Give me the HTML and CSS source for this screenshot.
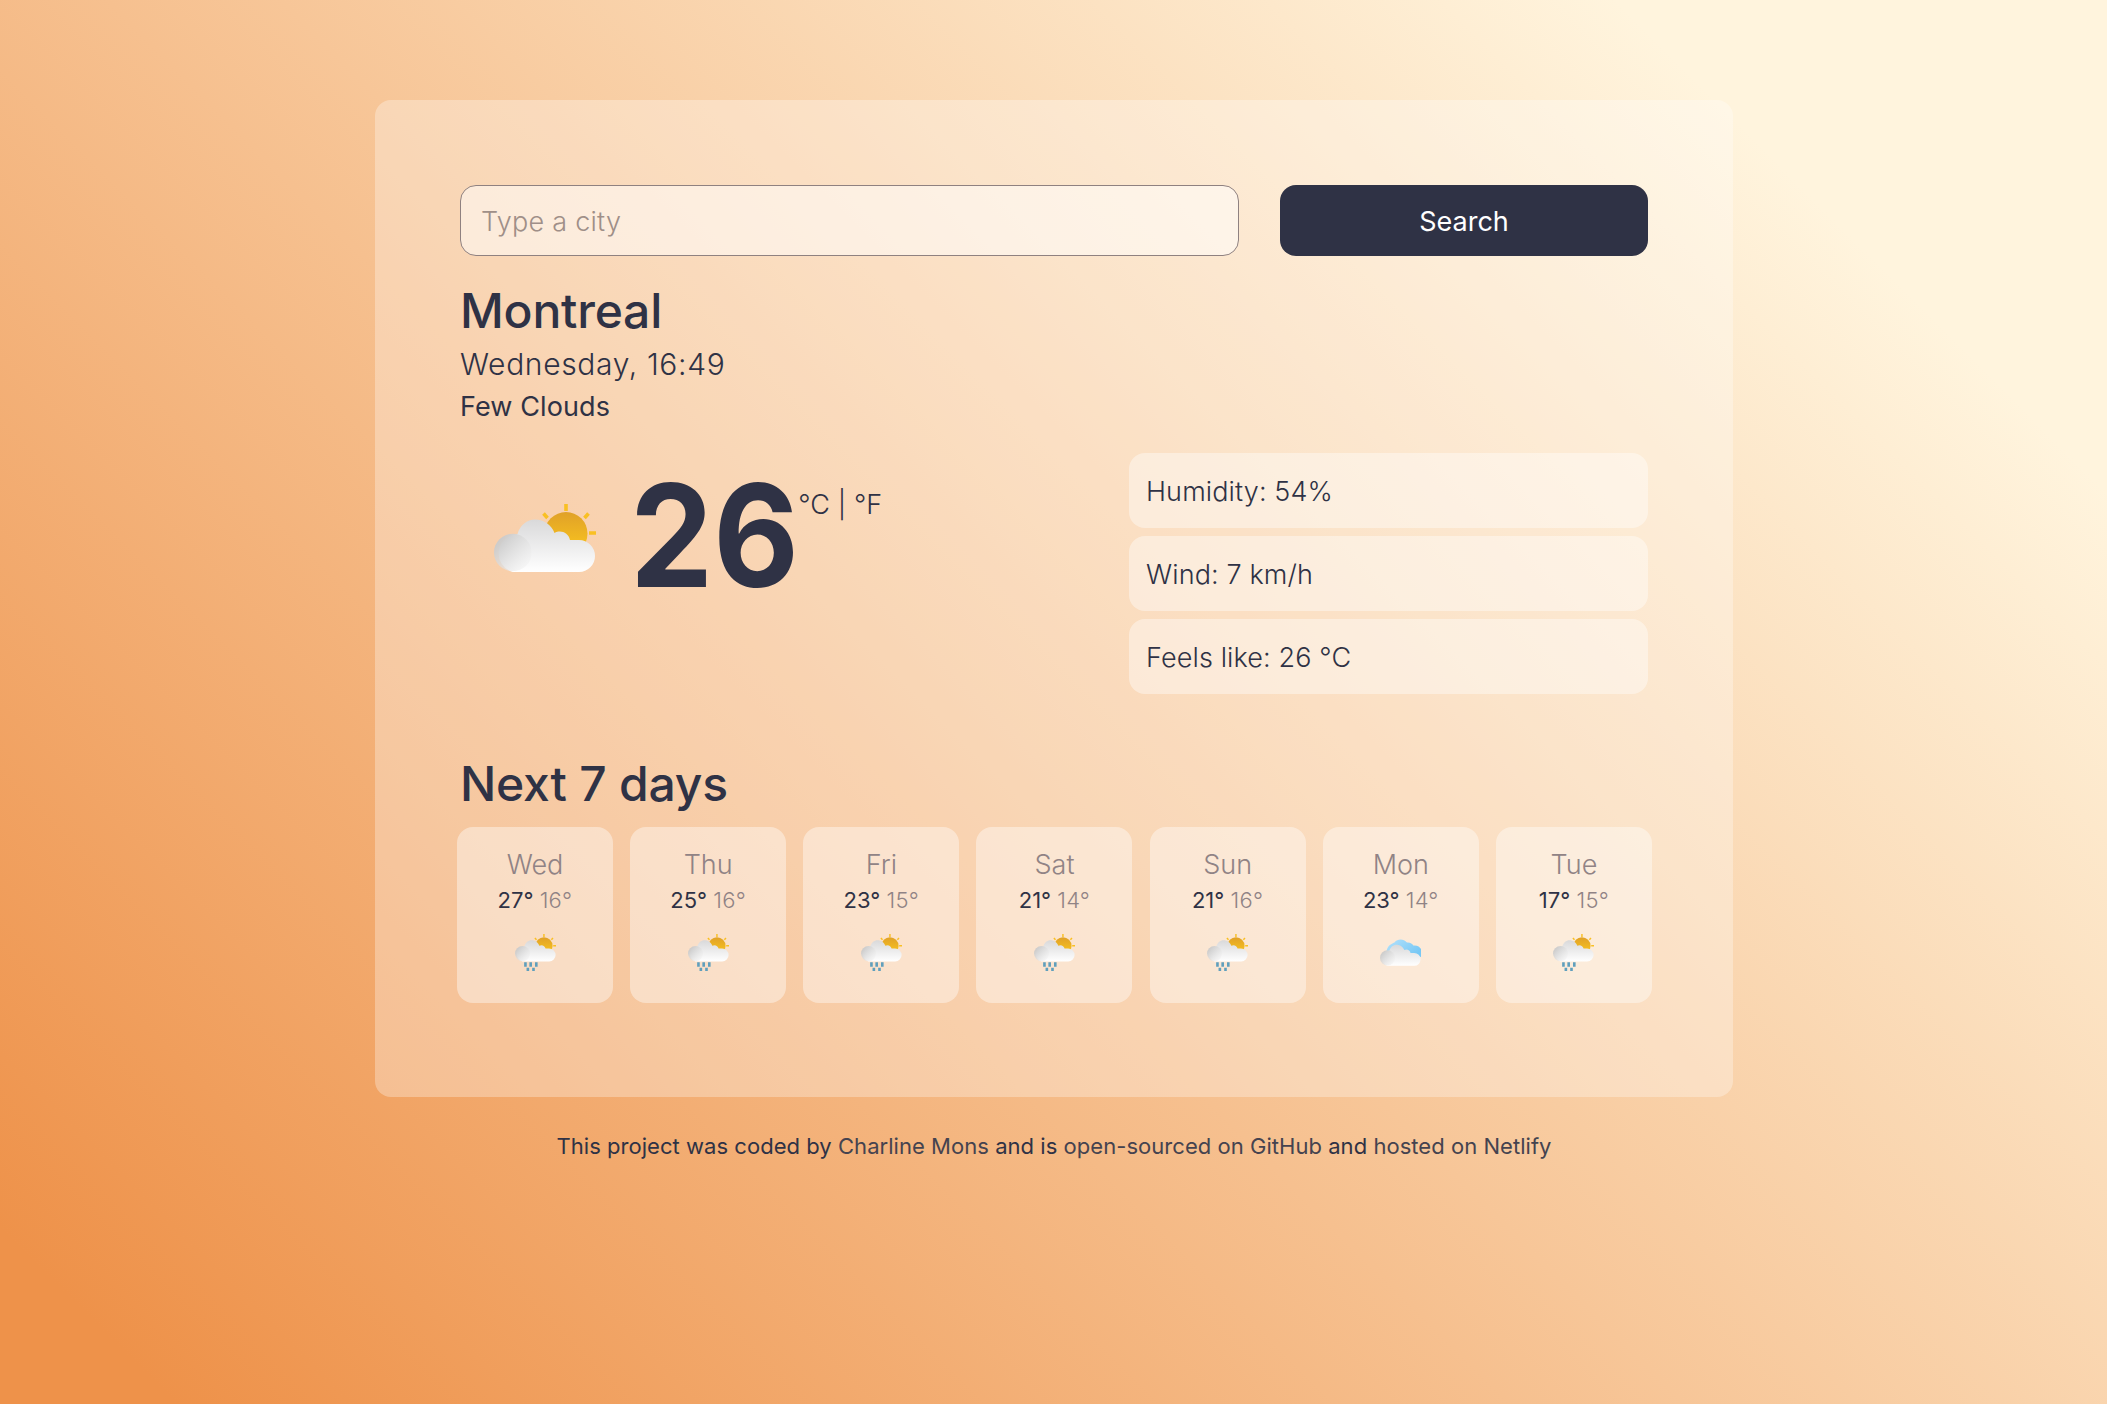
FILE: index.html
```
<!DOCTYPE html>
<html lang="en">
<head>
<meta charset="utf-8">
<title>Weather</title>
<link rel="stylesheet" href="styles.css">
</head>
<body>
<svg class="defs" width="0" height="0" aria-hidden="true">
  <defs>
    <linearGradient id="sun" x1="0" y1="0" x2="0" y2="1"><stop offset="0" stop-color="#e0a128"/><stop offset="1" stop-color="#fcc81d"/></linearGradient>
    <linearGradient id="cloud" x1="0" y1="0" x2="0" y2="1"><stop offset="0" stop-color="#d9d9da"/><stop offset="1" stop-color="#fff"/></linearGradient>
    <linearGradient id="puff" x1="0.1" y1="0.15" x2="0.85" y2="0.8"><stop offset="0" stop-color="#c9c9c9"/><stop offset="1" stop-color="#f0f0f0" stop-opacity="0.6"/></linearGradient>
    <linearGradient id="blue" x1="0" y1="0" x2="1" y2="0.6"><stop offset="0" stop-color="#b5e2fb"/><stop offset="1" stop-color="#78c8f5"/></linearGradient>
    <g id="sun-shape">
      <circle cx="72" cy="43.5" r="21.5" fill="url(#sun)"/>
      <path d="M72 14v7M49.5 23.500l4 4.500M94.500 23.500l-4 4.500M95 43h7" stroke="#f9c023" stroke-width="3.600" fill="none"/>
    </g>
    <g id="cloud-shape">
      <path d="M18.500 82a19.400 19.400 0 0 1 5-38C26 35 33 29.500 41 29.500c9 0 16.500 5.500 19.500 13.500 6-3.500 14-.5 15.500 7h9a16 16 0 0 1 0 32z" fill="url(#cloud)"/>
      <circle cx="18.800" cy="62.500" r="18.800" fill="url(#puff)"/>
    </g>
    <symbol id="few-clouds" viewBox="0 0 102 83"><use href="#sun-shape"/><use href="#cloud-shape"/></symbol>
    <symbol id="rain" viewBox="0 0 102 94">
      <use href="#sun-shape" transform="translate(0 -14)"/><use href="#cloud-shape" transform="translate(0 -14)"/>
      <path d="M26 70v11M39 70v11M53 70v11M32 84v8M46 84v8" stroke="#5f9fbd" stroke-width="6.500" fill="none"/>
    </symbol>
    <symbol id="clouds" viewBox="0 0 102 66">
      <path d="M16 32C18 15 28 12 36 8c8-10 23-9 31 0 8-1 13 3 17 8 9-1 15 4 18 8v20L60 34z" fill="url(#blue)"/>
      <use href="#cloud-shape" transform="translate(0 -16)"/>
    </symbol>
  </defs>
</svg>
<main class="panel">
  <form class="search">
    <input class="search-input" type="text" placeholder="Type a city">
    <button class="search-button" type="button">Search</button>
  </form>
  <h1 class="city">Montreal</h1>
  <p class="date">Wednesday, 16:49</p>
  <p class="description">Few Clouds</p>
  <section class="current">
    <div class="now">
      <svg class="now-icon"><use href="#few-clouds"/></svg>
      <strong class="temperature">26</strong>
      <span class="units">°C | °F</span>
    </div>
    <ul class="stats">
      <li class="stat">Humidity: 54%</li>
      <li class="stat">Wind: 7 km/h</li>
      <li class="stat">Feels like: 26 °C</li>
    </ul>
  </section>
  <h2 class="next">Next 7 days</h2>
  <section class="forecast">
    <article class="day"><h3 class="day-name">Wed</h3><p class="range">27° <span class="low">16°</span></p><svg class="day-icon"><use href="#rain"/></svg></article>
    <article class="day"><h3 class="day-name">Thu</h3><p class="range">25° <span class="low">16°</span></p><svg class="day-icon"><use href="#rain"/></svg></article>
    <article class="day"><h3 class="day-name">Fri</h3><p class="range">23° <span class="low">15°</span></p><svg class="day-icon"><use href="#rain"/></svg></article>
    <article class="day"><h3 class="day-name">Sat</h3><p class="range">21° <span class="low">14°</span></p><svg class="day-icon"><use href="#rain"/></svg></article>
    <article class="day"><h3 class="day-name">Sun</h3><p class="range">21° <span class="low">16°</span></p><svg class="day-icon"><use href="#rain"/></svg></article>
    <article class="day"><h3 class="day-name">Mon</h3><p class="range">23° <span class="low">14°</span></p><svg class="day-icon cloudy"><use href="#clouds"/></svg></article>
    <article class="day"><h3 class="day-name">Tue</h3><p class="range">17° <span class="low">15°</span></p><svg class="day-icon"><use href="#rain"/></svg></article>
  </section>
</main>
<footer class="footer">This project was coded by <a class="link">Charline Mons</a> and is <a class="link">open-sourced on GitHub</a> and <a class="link">hosted on Netlify</a></footer>
</body>
</html>
```
FILE: styles.css
```
* { box-sizing: border-box; margin: 0; padding: 0; }
body {
  min-height: 1404px;
  padding: 100px 0 0 1px;
  font-family: Inter, "Liberation Sans", sans-serif;
  font-weight: 400;
  color: #2f3245;
  background: linear-gradient(45deg, #ee924a 5%, #fff4dd 86%);
}
.defs { position: absolute; }
.panel {
  width: 1358px;
  height: 997px;
  margin: 0 auto;
  padding: 85px 85px 0;
  border-radius: 16px;
  background: rgba(255, 255, 255, 0.3);
}
.search { display: flex; justify-content: space-between; height: 71px; }
.search-input {
  width: 779px;
  padding: 1px 20px 0;
  border: 1px solid #8f8180;
  border-radius: 16px;
  background: rgba(255, 255, 255, 0.5);
  font: 300 27px Inter, sans-serif;
  letter-spacing: 0.25px;
  color: #2f3245;
}
.search-input::placeholder { color: #9f8f88; }
.search-button {
  width: 368px;
  padding-top: 1px;
  border: 0;
  border-radius: 16px;
  background: #2f3245;
  color: #fff;
  font: 400 27px Inter, sans-serif;
}
.city { margin-top: 26px; font-size: 48px; line-height: 58px; font-weight: 500; letter-spacing: -0.2px; }
.date { margin-top: 6px; font-size: 30px; line-height: 36px; font-weight: 300; letter-spacing: 0.65px; }
.description { margin-top: 9px; font-size: 27px; line-height: 32px; letter-spacing: 0.1px; }
.current { display: flex; justify-content: space-between; margin-top: 30px; }
.now { display: flex; align-items: flex-start; }
.now-icon { width: 102px; height: 83px; margin: 37px 36px 0 33.5px; }
.temperature {
  margin: -4px 0 0 -2px;
  font-size: 142px;
  line-height: 172px;
  font-weight: 700;
  transform: scaleX(0.93);
  transform-origin: left;
}
.units { margin: 36px 0 0 -13px; font-size: 27px; line-height: 32px; font-weight: 300; letter-spacing: 0.1px; }
.stats { width: 519px; display: grid; gap: 8px; list-style: none; }
.stat {
  height: 75px;
  padding: 1px 0 0 17px;
  border-radius: 16px;
  background: rgba(255, 255, 255, 0.4);
  font-size: 27px;
  line-height: 75px;
  font-weight: 300;
  letter-spacing: 0.12px;
}
.next { margin-top: 61px; font-size: 48px; line-height: 58px; font-weight: 500; letter-spacing: -0.2px; }
.forecast { display: flex; justify-content: space-between; margin: 14px -4px 0 -3px; }
.day {
  display: flex;
  flex-direction: column;
  align-items: center;
  width: 156px;
  height: 176px;
  padding-top: 22px;
  border-radius: 16px;
  background: rgba(255, 255, 255, 0.4);
}
.day-name { font-size: 27px; line-height: 32px; font-weight: 300; color: #908385; }
.range { margin-top: 6px; font-size: 22px; line-height: 27px; font-weight: 400; }
.low { font-weight: 300; letter-spacing: 0.3px; color: #908385; }
.day-icon { width: 41px; height: 38px; margin-top: 20px; }
.day-icon.cloudy { height: 27px; margin-top: 25px; }
.footer { margin-top: 36px; text-align: center; font-size: 22px; line-height: 27px; letter-spacing: 0.04px; }
.link { color: #45434f; }
```
